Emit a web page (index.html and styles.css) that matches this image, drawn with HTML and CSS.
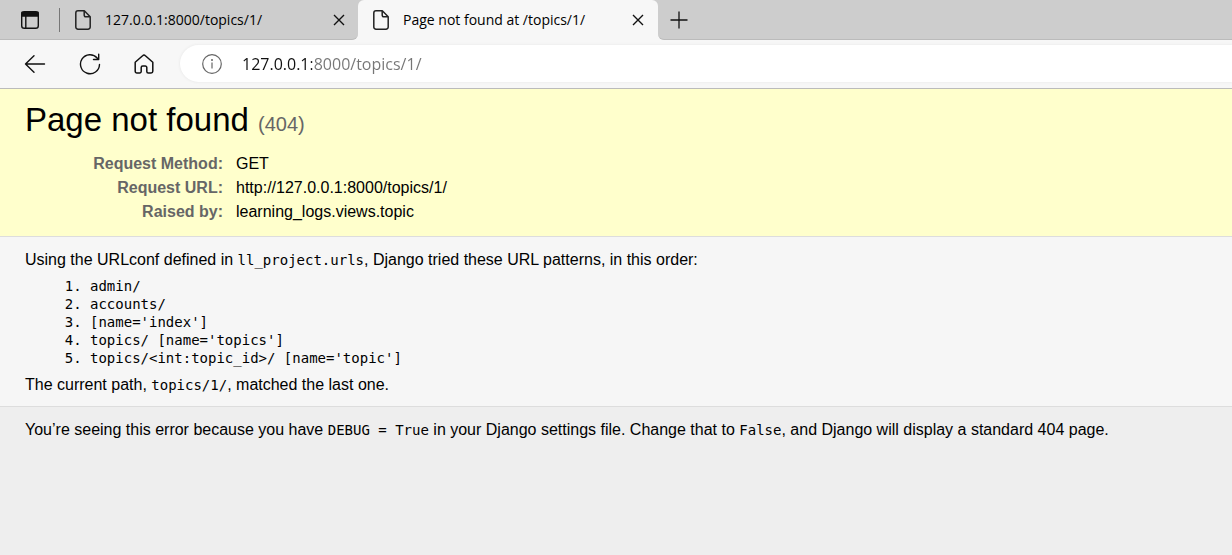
FILE: index.html
```html
<!DOCTYPE html>
<html lang="en">
<head>
<meta charset="utf-8">
<meta name="viewport" content="width=device-width, initial-scale=1">
<title>Page not found at /topics/1/</title>
<link rel="stylesheet" href="styles.css">
</head>
<body>
<header class="browser">
  <div class="tabstrip">
    <div class="tab-actions">
      <button class="icon-button" aria-label="Tab actions">
        <svg width="20" height="20" viewBox="0 0 20 20" fill="none" stroke="#111" stroke-width="1.4"><rect x="1.7" y="1.7" width="16.6" height="16.6" rx="2.6"/><path d="M2 2.5h16V6H2z" fill="#111"/><path d="M5.8 6v12"/></svg>
      </button>
    </div>
    <div class="tab">
      <svg class="page-icon" width="16" height="20" viewBox="0 0 16 20" fill="none" stroke="#222" stroke-width="1.5" stroke-linejoin="round"><path d="M3 .8h6.3L15.200 6.700V17a2.200 2.200 0 0 1-2.200 2.200H3A2.200 2.200 0 0 1 .8 17V3A2.200 2.200 0 0 1 3 .8z"/><path d="M9.200 1v4.300a1.500 1.500 0 0 0 1.500 1.500H15"/></svg>
      <span class="tab-title">127.0.0.1:8000/topics/1/</span>
      <button class="icon-button tab-close" aria-label="Close tab"><svg width="12" height="12" viewBox="0 0 12 12" stroke="#111" stroke-width="1.4"><path d="M1 1l10 10M11 1L1 11"/></svg></button>
    </div>
    <div class="tab tab-active">
      <svg class="page-icon" width="16" height="20" viewBox="0 0 16 20" fill="none" stroke="#222" stroke-width="1.5" stroke-linejoin="round"><path d="M3 .8h6.3L15.200 6.700V17a2.200 2.200 0 0 1-2.200 2.200H3A2.200 2.200 0 0 1 .8 17V3A2.200 2.200 0 0 1 3 .8z"/><path d="M9.200 1v4.300a1.500 1.500 0 0 0 1.500 1.500H15"/></svg>
      <span class="tab-title">Page not found at /topics/1/</span>
      <button class="icon-button tab-close" aria-label="Close tab"><svg width="12" height="12" viewBox="0 0 12 12" stroke="#111" stroke-width="1.4"><path d="M1 1l10 10M11 1L1 11"/></svg></button>
    </div>
    <div class="new-tab">
      <button class="icon-button" aria-label="New tab"><svg width="18" height="18" viewBox="0 0 18 18" stroke="#111" stroke-width="1.300"><path d="M9 .5v17M.5 9h17"/></svg></button>
    </div>
  </div>
  <nav class="toolbar" aria-label="Browser">
    <div class="nav-buttons">
      <button class="icon-button" aria-label="Back"><svg width="22" height="20" viewBox="0 0 22 20" fill="none" stroke="#111" stroke-width="1.400" stroke-linecap="round" stroke-linejoin="round"><path d="M20.500 10H1.500M10 1.700L1.500 10l8.500 8.300"/></svg></button>
      <button class="icon-button" aria-label="Refresh"><svg width="22" height="22" viewBox="0 0 22 22" fill="none" stroke="#111" stroke-width="1.400" stroke-linecap="round" stroke-linejoin="round"><path d="M20.500 11.500a9.500 9.500 0 1 1-2.300-6.500l1.300 1.300M19.700 1.300v5.200h-5.200"/></svg></button>
      <button class="icon-button" aria-label="Home"><svg width="20" height="20" viewBox="0 0 20 20" fill="none" stroke="#111" stroke-width="1.500" stroke-linejoin="round"><path d="M1.200 8.300L8.600 1.700a2 2 0 0 1 2.800 0l7.400 6.600v9a1.700 1.700 0 0 1-1.700 1.700h-2.800a1.500 1.500 0 0 1-1.500-1.500v-4a1.500 1.500 0 0 0-1.500-1.500H8.700a1.500 1.500 0 0 0-1.500 1.500v4A1.500 1.500 0 0 1 5.700 19H2.900a1.700 1.700 0 0 1-1.700-1.700z"/></svg></button>
    </div>
    <div class="address">
      <button class="icon-button" aria-label="View site information"><svg width="20" height="20" viewBox="0 0 20 20" fill="none" stroke="#666" stroke-width="1.200"><circle cx="10" cy="10" r="9.300"/><path d="M10 8.500v6"/><circle cx="10" cy="5.900" r="1" fill="#666" stroke="none"/></svg></button>
      <input class="address-input" type="text" aria-label="Address" value="127.0.0.1:8000/topics/1/" spellcheck="false">
    </div>
  </nav>
</header>
<main>
  <section class="summary">
    <h1>Page not found <span>(404)</span></h1>
    <table class="meta">
      <tbody>
        <tr><th scope="row">Request Method:</th><td>GET</td></tr>
        <tr><th scope="row">Request URL:</th><td>http://127.0.0.1:8000/topics/1/</td></tr>
        <tr><th scope="row">Raised by:</th><td>learning_logs.views.topic</td></tr>
      </tbody>
    </table>
  </section>
  <section class="info">
    <p>Using the URLconf defined in <code>ll_project.urls</code>, Django tried these URL patterns, in this order:</p>
    <ol>
      <li>admin/</li>
      <li>accounts/</li>
      <li>[name='index']</li>
      <li>topics/ [name='topics']</li>
      <li>topics/&lt;int:topic_id&gt;/ [name='topic']</li>
    </ol>
    <p>The current path, <code>topics/1/</code>, matched the last one.</p>
  </section>
  <section class="explanation">
    <p>You’re seeing this error because you have <code>DEBUG = True</code> in your Django settings file. Change that to <code>False</code>, and Django will display a standard 404 page.</p>
  </section>
</main>
</body>
</html>
```

FILE: styles.css
```css
* { box-sizing: border-box; }

body {
  margin: 0;
  background: #eee;
  color: #000;
  font: 16px/20px "Liberation Sans", Arial, sans-serif;
}

h1, p, ol { margin: 0; }

.browser {
  background: #f7f7f7;
  border-bottom: 1px solid #bbb;
  font-family: "Open Sans", "Segoe UI", sans-serif;
}

.icon-button {
  display: flex;
  flex: none;
  align-items: center;
  justify-content: center;
  padding: 0;
  border: 0;
  background: none;
}

.tabstrip {
  display: flex;
  height: 40px;
  background: #f7f7f7;
}

.tab-actions, .tab, .new-tab {
  display: flex;
  align-items: center;
  background: #cdcdcd;
  border-bottom: 1px solid #bbb;
}

.tab-actions {
  flex: none;
  width: 60px;
  padding-left: 20px;
  background: linear-gradient(#777, #777) right 8px / 1px 24px no-repeat #cdcdcd;
}

.tab {
  flex: 0 1 298px;
  min-width: 0;
  padding: 0 12px 0 15px;
  border-bottom-right-radius: 6px;
}

.tab-active {
  flex-basis: 300px;
  border-bottom-color: #f7f7f7;
  border-radius: 6px 6px 0 0;
  background: #f7f7f7;
  box-shadow: 0 -6px 0 #cdcdcd;
}

.page-icon { flex: none; }

.tab-title {
  flex: 1;
  overflow: hidden;
  margin-left: 14px;
  font-size: 14px;
  white-space: nowrap;
}

.tab:not(.tab-active) .tab-close { margin-right: 1px; }
.tab-active .tab-close { margin-right: 2px; }

.new-tab {
  flex: 1;
  padding-left: 12px;
  border-bottom-left-radius: 6px;
}

.toolbar {
  display: flex;
  align-items: center;
  padding: 5px 0 6px 24px;
}

.nav-buttons {
  display: flex;
  flex: none;
  gap: 33px;
  align-items: center;
  margin-right: 26px;
}

.address {
  display: flex;
  flex: 1;
  gap: 20px;
  align-items: center;
  min-width: 0;
  height: 37px;
  padding-left: 22px;
  border-radius: 19px 0 0 19px;
  background: #fff;
  box-shadow: 0 0 3px #e4e4e4;
}

.address-input {
  flex: 1;
  min-width: 0;
  padding: 0;
  border: 0;
  outline: 0;
  background: linear-gradient(90deg, #111 70px, #767676 70px);
  background-clip: text;
  -webkit-background-clip: text;
  color: #767676;
  -webkit-text-fill-color: transparent;
  font: 16px/24px "Open Sans", "Segoe UI", sans-serif;
}

.summary {
  padding: 11px 25px 12px;
  border-bottom: 1px solid #ddd;
  background: #ffc;
}

h1 {
  font-size: 33px;
  font-weight: 400;
  line-height: 40px;
}

h1 span {
  color: #666;
  font-size: 20px;
}

.meta {
  margin-top: 8px;
  border-collapse: collapse;
}

.meta th, .meta td { padding: 2px 0; }

.meta th {
  width: 198px;
  color: #666;
  text-align: right;
}

.meta td { padding-left: 13px; }

.info {
  padding: 13px 25px 11px;
  border-bottom: 1px solid #ddd;
  background: #f6f6f6;
}

.info ol {
  margin: 7px 0 8px;
  padding-left: 65px;
  line-height: 18px;
}

code, .info ol {
  font-family: "DejaVu Sans Mono", Consolas, monospace;
  font-size: 14px;
}

.explanation { padding: 13px 25px; }
```
